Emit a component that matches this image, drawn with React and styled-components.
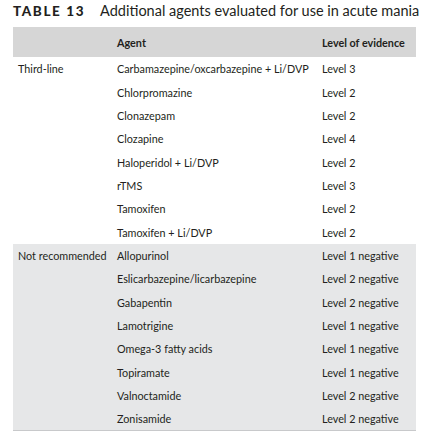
import React from "react";
import styled, { createGlobalStyle } from "styled-components";

const GlobalStyle = createGlobalStyle`
  html, body {
    margin: 0;
    padding: 0;
    background: #ffffff;
  }
  body {
    font-family: Lato, "Liberation Sans", sans-serif;
    color: #231f20;
  }
`;

const Page = styled.div`
  padding: 2px 9px 0 13px;
  width: 403px;
`;

const Caption = styled.div`
  display: flex;
  align-items: baseline;
  gap: 15px;
  height: 25px;
  white-space: nowrap;
`;

const Label = styled.span`
  font-weight: 900;
  font-size: 13.5px;
  letter-spacing: 1.6px;
  color: #231f20;
`;

const Title = styled.span`
  font-size: 14.5px;
  color: #231f20;
`;

const Table = styled.table`
  width: 403px;
  table-layout: fixed;
  border-collapse: collapse;
  font-size: 10.8px;
  border-bottom: 1px solid #c8c9cb;

  th,
  td {
    box-sizing: border-box;
  }
`;

const HeadRow = styled.tr`
  background: #d6d6d6;
  height: 30px;
`;

const Th = styled.th`
  text-align: left;
  font-weight: 700;
  padding: 0;
  padding-left: ${(p) => p.$pad || 0}px;
  width: ${(p) => (p.$w ? `${p.$w}px` : "auto")};
`;

const Row = styled.tr`
  background: ${(p) => (p.$shade ? "#e6e7e8" : "#ffffff")};
  height: 23.35px;
`;

const Td = styled.td`
  padding: 0;
  padding-left: ${(p) => p.$pad || 0}px;
  vertical-align: middle;
  white-space: nowrap;
`;

const groups = [
  {
    name: "Third-line",
    shade: false,
    rows: [
      ["Carbamazepine/oxcarbazepine + Li/DVP", "Level 3"],
      ["Chlorpromazine", "Level 2"],
      ["Clonazepam", "Level 2"],
      ["Clozapine", "Level 4"],
      ["Haloperidol + Li/DVP", "Level 2"],
      ["rTMS", "Level 3"],
      ["Tamoxifen", "Level 2"],
      ["Tamoxifen + Li/DVP", "Level 2"],
    ],
  },
  {
    name: "Not recommended",
    shade: true,
    rows: [
      ["Allopurinol", "Level 1 negative"],
      ["Eslicarbazepine/licarbazepine", "Level 2 negative"],
      ["Gabapentin", "Level 2 negative"],
      ["Lamotrigine", "Level 1 negative"],
      ["Omega-3 fatty acids", "Level 1 negative"],
      ["Topiramate", "Level 1 negative"],
      ["Valnoctamide", "Level 2 negative"],
      ["Zonisamide", "Level 2 negative"],
    ],
  },
];

export default function App() {
  return (
    <>
      <GlobalStyle />
      <Page>
        <Caption>
          <Label>TABLE 13</Label>
          <Title>Additional agents evaluated for use in acute mania</Title>
        </Caption>
        <Table>
          <thead>
            <HeadRow>
              <Th $w={104} $pad={5}></Th>
              <Th $w={205}>Agent</Th>
              <Th>Level of evidence</Th>
            </HeadRow>
          </thead>
          <tbody>
            {groups.map((g) =>
              g.rows.map(([agent, level], i) => (
                <Row key={g.name + agent} $shade={g.shade}>
                  <Td $pad={5}>{i === 0 ? g.name : ""}</Td>
                  <Td>{agent}</Td>
                  <Td>{level}</Td>
                </Row>
              ))
            )}
          </tbody>
        </Table>
      </Page>
    </>
  );
}
